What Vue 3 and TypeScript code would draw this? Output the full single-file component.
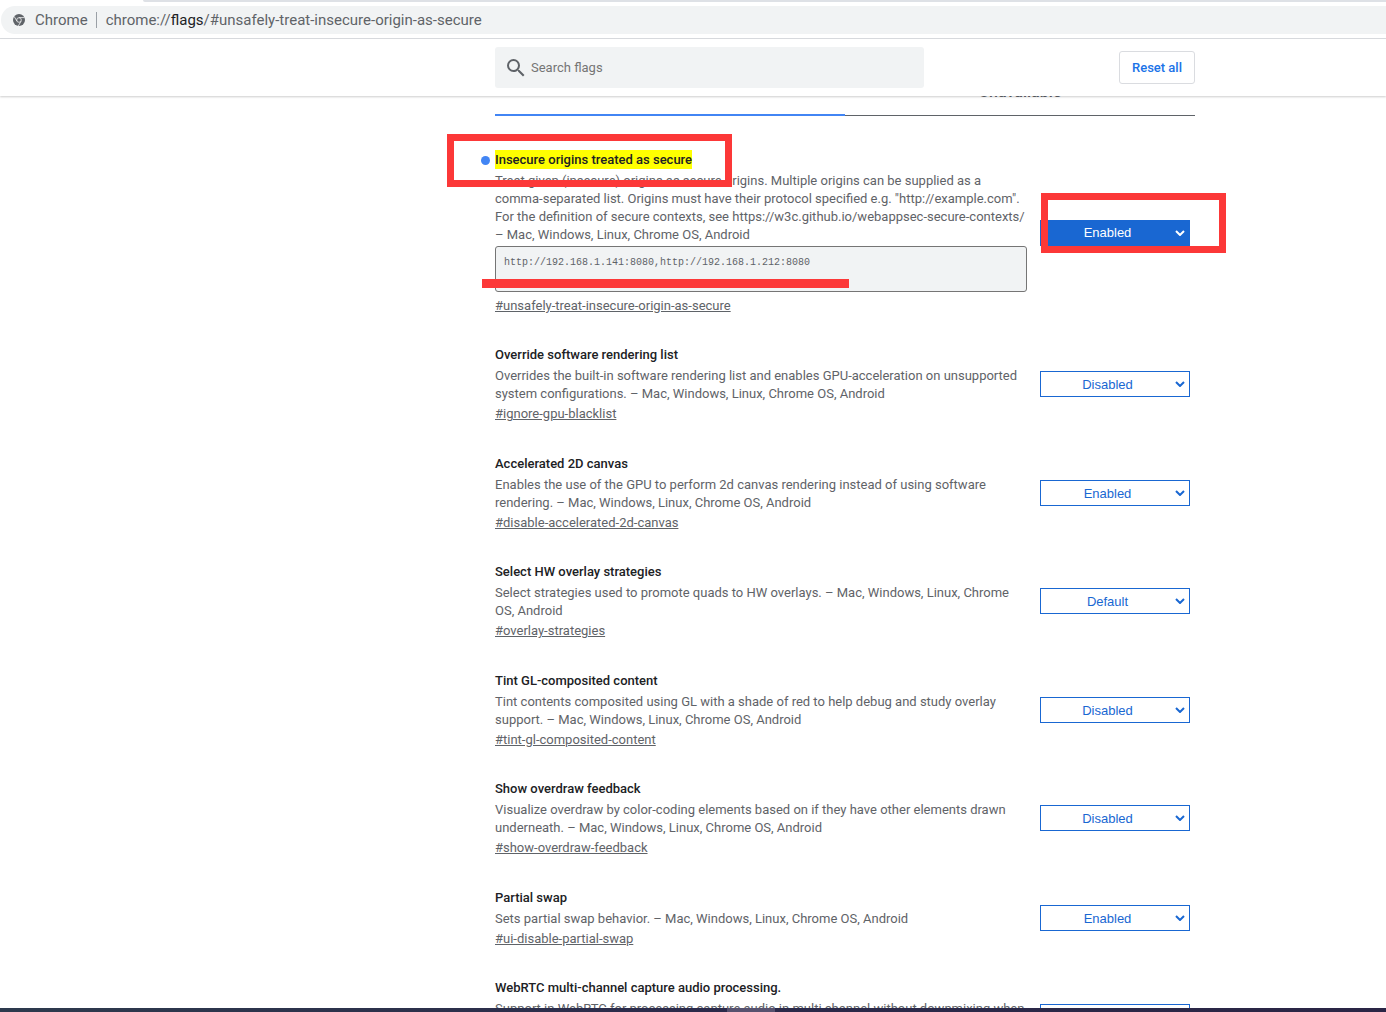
<script setup lang="ts">
import { ref } from 'vue'

interface Flag {
  id: string
  title: string
  text: string
  value: string
  input?: string
}

const platforms = 'Mac, Windows, Linux, Chrome OS, Android'

const flags = ref<Flag[]>([
  {
    id: 'unsafely-treat-insecure-origin-as-secure',
    title: 'Insecure origins treated as secure',
    text: 'Treat given (insecure) origins as secure origins. Multiple origins can be supplied as a comma-separated list. Origins must have their protocol specified e.g. "http://example.com". For the definition of secure contexts, see https://w3c.github.io/webappsec-secure-contexts/',
    value: 'Enabled',
    input: 'http://192.168.1.141:8080,http://192.168.1.212:8080',
  },
  {
    id: 'ignore-gpu-blacklist',
    title: 'Override software rendering list',
    text: 'Overrides the built-in software rendering list and enables GPU-acceleration on unsupported system configurations.',
    value: 'Disabled',
  },
  {
    id: 'disable-accelerated-2d-canvas',
    title: 'Accelerated 2D canvas',
    text: 'Enables the use of the GPU to perform 2d canvas rendering instead of using software rendering.',
    value: 'Enabled',
  },
  {
    id: 'overlay-strategies',
    title: 'Select HW overlay strategies',
    text: 'Select strategies used to promote quads to HW overlays.',
    value: 'Default',
  },
  {
    id: 'tint-gl-composited-content',
    title: 'Tint GL-composited content',
    text: 'Tint contents composited using GL with a shade of red to help debug and study overlay support.',
    value: 'Disabled',
  },
  {
    id: 'show-overdraw-feedback',
    title: 'Show overdraw feedback',
    text: 'Visualize overdraw by color-coding elements based on if they have other elements drawn underneath.',
    value: 'Disabled',
  },
  {
    id: 'ui-disable-partial-swap',
    title: 'Partial swap',
    text: 'Sets partial swap behavior.',
    value: 'Enabled',
  },
  {
    id: 'webrtc-multi-channel-capture',
    title: 'WebRTC multi-channel capture audio processing.',
    text: 'Support in WebRTC for processing capture audio in multi channel without downmixing when running APM.',
    value: 'Default',
  },
])

const options = ['Default', 'Enabled', 'Disabled']
</script>

<template>
  <div class="window">
    <div class="toolbar">
      <div class="tabstrip"></div>
      <div class="omnibox">
        <svg class="site-icon" viewBox="0 0 24 24" aria-hidden="true">
          <circle cx="12" cy="12" r="12" fill="#5f6368" />
          <circle cx="12" cy="12" r="4.6" fill="none" stroke="#f1f3f4" stroke-width="1.6" />
          <path d="M12 7.2H23M7.9 14.4L2.4 4.9M16.1 14.4L10.6 23.9" stroke="#f1f3f4" stroke-width="1.6" />
        </svg>
        <span class="site-name">Chrome</span>
        <span class="url">chrome://<b>flags</b>/#unsafely-treat-insecure-origin-as-secure</span>
      </div>
    </div>

    <header class="header">
      <div class="header-inner">
        <label class="search">
          <svg viewBox="0 0 24 24" aria-hidden="true">
            <path
              fill="#5f6368"
              d="M15.5 14h-.79l-.28-.27A6.47 6.47 0 0 0 16 9.5 6.5 6.5 0 1 0 9.5 16c1.61 0 3.09-.59 4.23-1.57l.27.28v.79l5 4.99L20.49 19l-4.99-5zm-6 0C7.01 14 5 11.99 5 9.5S7.01 5 9.5 5 14 7.01 14 9.5 11.99 14 9.5 14z"
            />
          </svg>
          <input type="text" placeholder="Search flags" aria-label="Search flags" />
        </label>
        <button class="reset" type="button">Reset all</button>
      </div>
    </header>

    <main class="body">
      <div class="column">
        <nav class="tabs">
          <button class="tab selected" type="button" aria-label="Available"></button>
          <button class="tab" type="button">Unavailable</button>
        </nav>

        <section v-for="(flag, i) in flags" :key="flag.id" class="flag">
          <div class="info">
            <h3 :class="{ changed: i === 0 }"><span>{{ flag.title }}</span></h3>
            <p>{{ flag.text }} – {{ platforms }}</p>
            <div v-if="flag.input" class="origin">
              <textarea v-model="flag.input" :aria-label="flag.title" spellcheck="false"></textarea>
              <i class="mark mark-line"></i>
            </div>
            <a :href="'#' + flag.id">#{{ flag.id }}</a>
          </div>
          <div class="choice" :class="{ active: i === 0 }">
            <select v-model="flag.value" :aria-label="flag.title">
              <option v-for="o in options" :key="o">{{ o }}</option>
            </select>
            <svg viewBox="0 0 10 6" aria-hidden="true">
              <path d="M1 1l4 4 4-4" fill="none" stroke="currentColor" stroke-width="2" />
            </svg>
            <i v-if="i === 0" class="mark mark-choice"></i>
          </div>
          <i v-if="i === 0" class="mark mark-title"></i>
        </section>
      </div>
    </main>

    <footer class="taskbar"><span></span></footer>
  </div>
</template>

<style>
body {
  margin: 0;
  overflow: hidden;
}
</style>

<style scoped>
.window {
  display: flex;
  flex-direction: column;
  height: 100vh;
  background: #fff;
  color: #5f6368;
  font-family: Roboto, sans-serif;
  font-size: 13px;
  line-height: 18px;
  overflow: hidden;
}
.window * {
  box-sizing: border-box;
}
.toolbar {
  flex: none;
  border-bottom: 1px solid #dadce0;
}
.tabstrip {
  height: 2px;
  margin-left: 143px;
  background: #dee1e6;
  border-bottom-left-radius: 6px;
}
.omnibox {
  display: flex;
  align-items: center;
  height: 28px;
  margin: 4px 0 4px 1px;
  padding-left: 12px;
  background: #f1f3f4;
  border-radius: 14px 0 0 14px;
  font-size: 15px;
  white-space: nowrap;
}
.site-icon {
  width: 12px;
  height: 12px;
}
.site-name {
  margin-left: 10px;
  padding-right: 8px;
  line-height: 16px;
  border-right: 1px solid #9aa0a6;
}
.url {
  margin-left: 9px;
}
.url b {
  color: #202124;
  font-weight: 400;
}
.header,
.body {
  display: grid;
  grid-template-columns: 495fr 700px 191fr;
}
.header {
  position: relative;
  z-index: 1;
  flex: none;
  background: #fff;
  box-shadow: 0 1px 2px rgba(0, 0, 0, 0.2);
}
.header-inner {
  grid-column: 2;
  display: flex;
  align-items: center;
  justify-content: space-between;
  height: 57px;
}
.search {
  display: flex;
  align-items: center;
  width: 429px;
  height: 41px;
  padding-left: 9px;
  background: #f1f3f4;
  border-radius: 3px;
}
.search svg {
  width: 24px;
  height: 24px;
}
.search input {
  flex: 1;
  margin-left: 3px;
  padding: 0;
  border: 0;
  outline: 0;
  background: none;
  font: inherit;
}
.search input::placeholder {
  color: #757575;
}
.reset {
  width: 76px;
  height: 33px;
  padding: 0;
  background: #fff;
  border: 1px solid #dadce0;
  border-radius: 3px;
  color: #1a73e8;
  font: inherit;
  font-weight: 500;
}
.body {
  flex: 1;
  min-height: 0;
  overflow: hidden;
}
.column {
  grid-column: 2;
}
.tabs {
  display: flex;
  height: 20px;
  align-items: flex-end;
}
.tab {
  flex: 1;
  height: 40px;
  padding: 0 0 7px;
  background: none;
  border: 0;
  border-bottom: 1px solid #5f6368;
  color: #5f6368;
  font: inherit;
  font-size: 16px;
  line-height: 18px;
  font-weight: 500;
}
.tab.selected {
  border-bottom: 2px solid #4285f4;
}
.flag {
  position: relative;
  display: grid;
  grid-template-columns: minmax(0, 1fr) 150px;
  align-items: center;
  column-gap: 13px;
  margin-bottom: 30px;
  padding-right: 5px;
}
.flag:nth-child(odd) {
  margin-bottom: 31px;
}
.tabs + .flag {
  margin-top: 34px;
}
h3 {
  display: flex;
  margin: 0;
  color: #202124;
  font-size: 13px;
  font-weight: 500;
  line-height: 19px;
}
h3.changed span {
  background: #ff0;
}
h3.changed::before {
  content: "";
  width: 9px;
  height: 9px;
  margin: 6px 5px 0 -14px;
  background: #4285f4;
  border-radius: 50%;
}
p {
  margin: 3px 0 2px;
}
.info a {
  display: block;
  width: fit-content;
  color: #5f6368;
}
.origin {
  position: relative;
  margin-bottom: 5px;
}
textarea {
  display: block;
  width: 100%;
  height: 46px;
  padding: 7px 8px;
  background: #f1f3f4;
  border: 1px solid #757575;
  border-radius: 3px;
  outline: 0;
  color: #5f6368;
  font-family: "Liberation Mono", monospace;
  font-size: 10px;
  line-height: 18px;
  resize: none;
  overflow: hidden;
}
.choice {
  position: relative;
  color: #1967d2;
}
.choice select {
  display: block;
  width: 100%;
  height: 26px;
  padding: 0 15px 0 0;
  appearance: none;
  background: #fff;
  border: 1px solid #1967d2;
  border-radius: 0;
  color: inherit;
  font-family: "Liberation Sans", sans-serif;
  font-size: 13px;
  text-align: center;
  text-align-last: center;
}
.choice svg {
  position: absolute;
  top: 10px;
  right: 5px;
  width: 10px;
  height: 6px;
}
.choice.active {
  color: #fff;
}
.choice.active select {
  background: #1967d2;
}
.mark {
  position: absolute;
  pointer-events: none;
}
.mark-title {
  top: -16px;
  left: -48px;
  width: 285px;
  height: 53px;
  border: 7px solid #fc3838;
}
.mark-choice {
  top: -27px;
  left: 1px;
  width: 185px;
  height: 60px;
  border: 7px solid #fc3838;
}
.mark-line {
  top: 33px;
  left: -13px;
  width: 367px;
  height: 9px;
  background: #fc3838;
}
.taskbar {
  flex: none;
  display: grid;
  grid-template-columns: 727fr 48px 611fr;
  height: 4px;
  background: linear-gradient(90deg, #2d3a4d, #2b2a4a 50%, #2a2545);
}
.taskbar span {
  grid-column: 2;
  background: #57526f;
}
</style>
